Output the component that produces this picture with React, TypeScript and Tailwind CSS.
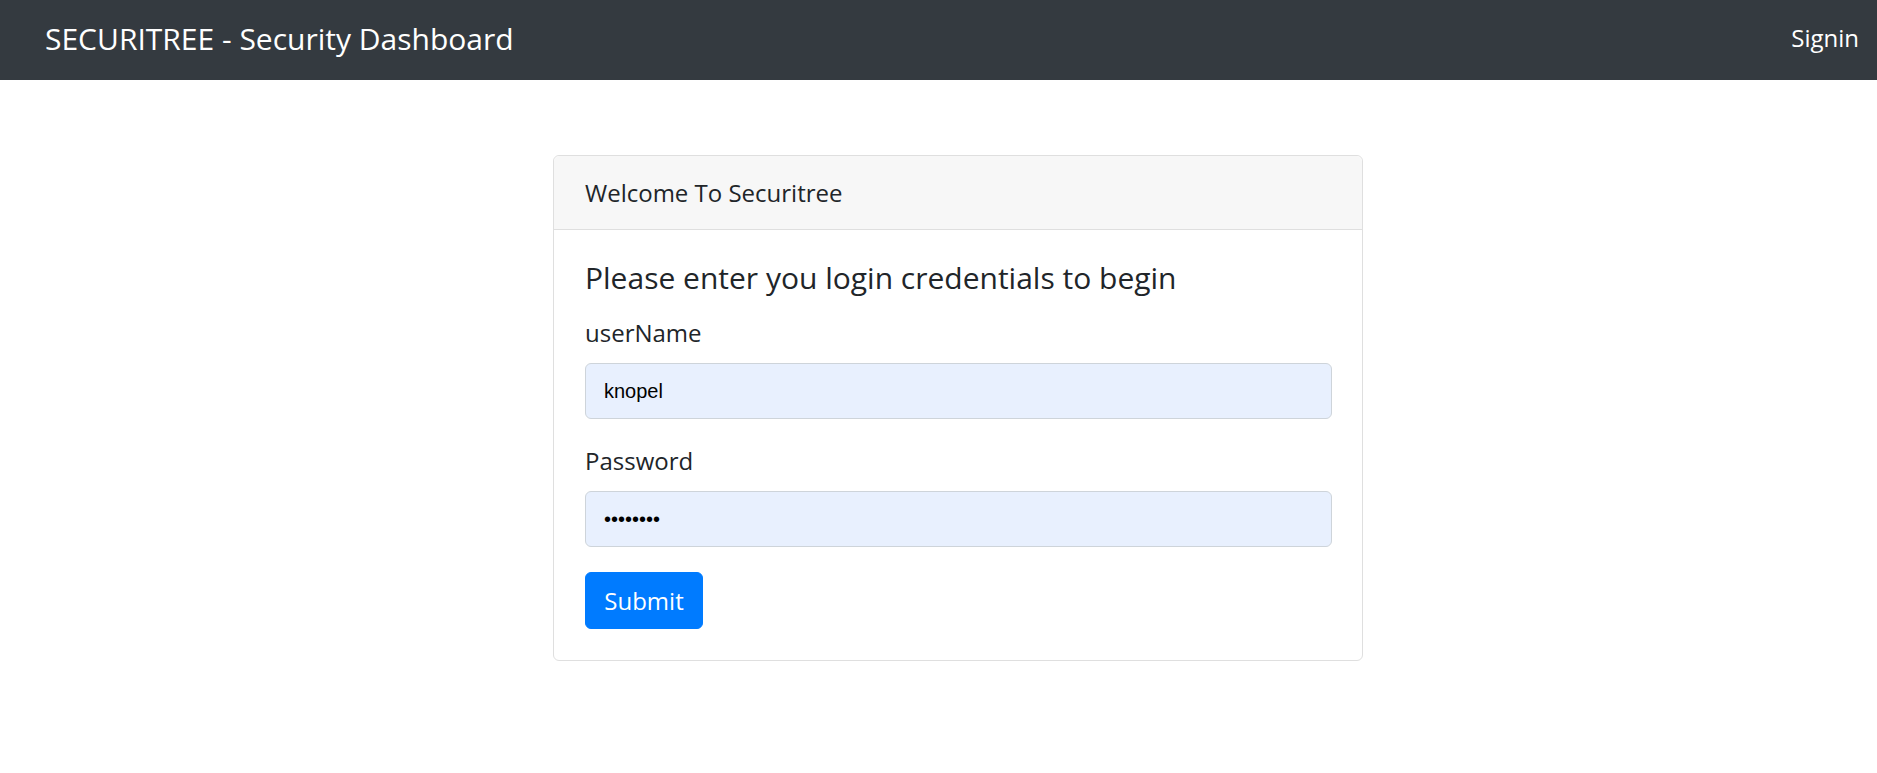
import React from "react";

const App: React.FC = () => {
  return (
    <div className="min-h-screen bg-white font-['Open_Sans',sans-serif] text-[#212529]">
      {/* Navbar */}
      <nav className="flex h-[80px] items-start justify-between bg-[#343a40] pl-[45px] pr-[18px] text-white">
        <span className="pt-[16px] text-[30px] leading-[45px]">SECURITREE - Security Dashboard</span>
        <a className="pt-[20px] text-[24px] leading-[36px]" href="#">
          Signin
        </a>
      </nav>

      {/* Login card */}
      <div className="mt-[75px] pl-[553px]">
        <div className="w-[810px] rounded-[6px] border border-[#dfdfdf] bg-white">
          <div className="rounded-t-[6px] border-b border-[#dfdfdf] bg-[#f7f7f7] px-[31px] pb-[18px] pt-[19px] text-[24px] leading-[36px]">
            Welcome To Securitree
          </div>
          <form className="flex flex-col pl-[31px] pr-[30px] pb-[31px] pt-[30px]" onSubmit={(e) => e.preventDefault()}>
            <h5 className="mb-[19px] text-[30px] leading-[36px]">Please enter you login credentials to begin</h5>

            <label className="text-[24px] leading-[36px]">userName</label>
            <input
              className="mt-[12px] h-[56px] w-full rounded-[6px] border border-[#ced4da] bg-[#e8f0fe] px-[18px] font-['Liberation_Sans',Arial,sans-serif] text-[20px] text-black outline-none"
              type="text"
              defaultValue="knopel"
            />

            <label className="mt-[24px] text-[24px] leading-[36px]">Password</label>
            <input
              className="mt-[12px] h-[56px] w-full rounded-[6px] border border-[#ced4da] bg-[#e8f0fe] px-[18px] font-['Liberation_Sans',Arial,sans-serif] text-[20px] text-black outline-none"
              type="text"
              readOnly
              defaultValue="••••••••"
            />

            <div className="mt-[25px]">
              <button
                type="submit"
                className="h-[57px] w-[118px] rounded-[6px] border border-[#007bff] bg-[#007bff] text-[24px] leading-[36px] text-white"
              >
                Submit
              </button>
            </div>
          </form>
        </div>
      </div>
    </div>
  );
};

export default App;
